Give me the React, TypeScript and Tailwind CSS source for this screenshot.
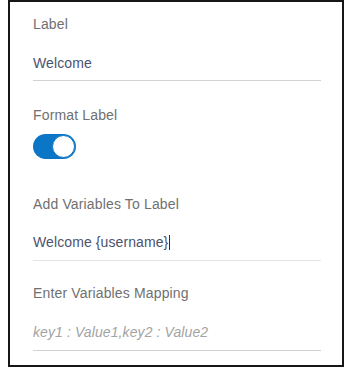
import React from "react";

const FONT = { fontFamily: '"Liberation Sans", Arial, sans-serif' };

function FieldLabel({ children, className = "" }: { children: React.ReactNode; className?: string }) {
  return (
    <div className={`text-[14px] leading-[16px] tracking-[0.15px] text-[#707070] ${className}`}>{children}</div>
  );
}

function TextField({
  label,
  value,
  placeholder,
  caret,
  top,
  gap,
  pb,
  lineColor,
}: {
  label: string;
  value?: string;
  placeholder?: string;
  caret?: boolean;
  top: string;
  gap: string;
  pb: string;
  lineColor: string;
}) {
  return (
    <div className={top}>
      <FieldLabel>{label}</FieldLabel>
      <div className={`${gap} ${pb} border-b ${lineColor}`}>
        {value ? (
          <div className="flex items-center text-[14px] leading-[16px] tracking-[0.1px] text-[#4d526e]">
            <span>{value}</span>
            {caret && <span className="ml-[1px] inline-block h-[15px] w-[1px] bg-[#2b2f45]" />}
          </div>
        ) : (
          <div className="text-[14px] leading-[16px] tracking-[0.1px] italic text-[#a3a3a3]">{placeholder}</div>
        )}
      </div>
    </div>
  );
}

function Toggle({ on }: { on: boolean }) {
  return (
    <div
      className={`flex h-[25px] w-[43px] items-center rounded-full px-[1px] ${
        on ? "justify-end bg-[#0b75c6]" : "justify-start bg-[#c8c8c8]"
      }`}
    >
      <div className="h-[23px] w-[23px] rounded-full border border-[#0b75c6] bg-white" />
    </div>
  );
}

export default function App() {
  return (
    <div className="bg-white pl-[8px]" style={FONT}>
      <div className="h-[367px] w-[336px] border-2 border-[#161616] bg-white pl-[23px] pr-[21px] pt-[14px]">
        <TextField
          label="Label"
          value="Welcome"
          top=""
          gap="mt-[23px]"
          pb="pb-[9px]"
          lineColor="border-[#d2d2d2]"
        />

        <div className="mt-[26px]">
          <FieldLabel>Format Label</FieldLabel>
          <div className="mt-[11px]">
            <Toggle on />
          </div>
        </div>

        <TextField
          label="Add Variables To Label"
          value="Welcome {username}"
          caret
          top="mt-[37px]"
          gap="mt-[22px]"
          pb="pb-[10px]"
          lineColor="border-[#e4e4e4]"
        />

        <TextField
          label="Enter Variables Mapping"
          placeholder="key1 : Value1,key2 : Value2"
          top="mt-[24px]"
          gap="mt-[23px]"
          pb="pb-[10px]"
          lineColor="border-[#d2d2d2]"
        />
      </div>
    </div>
  );
}
